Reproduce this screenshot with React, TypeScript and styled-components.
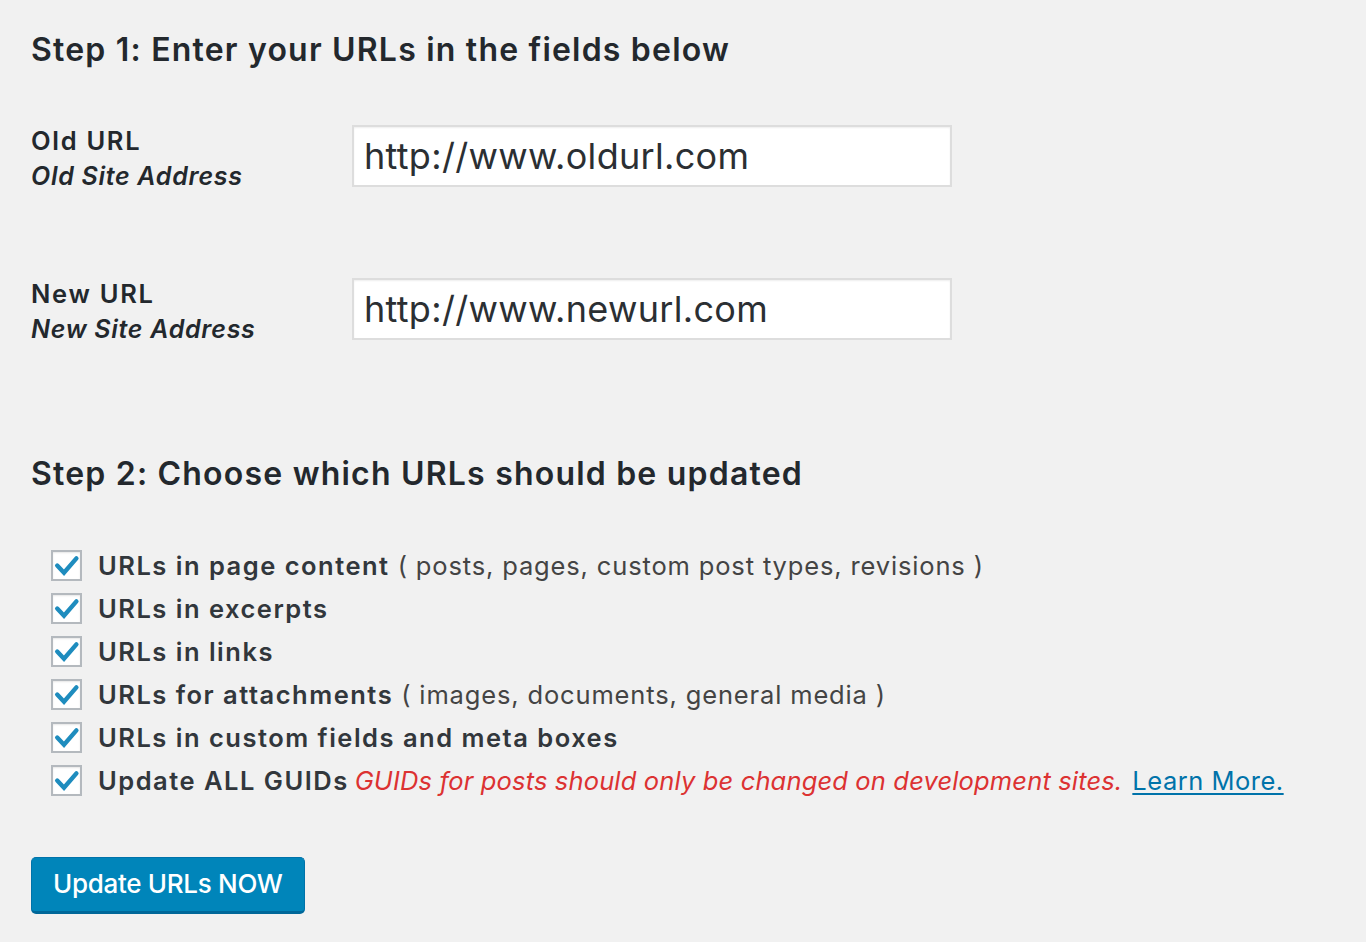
import React from "react";
import styled, { createGlobalStyle } from "styled-components";

const Global = createGlobalStyle`
  html, body {
    margin: 0;
    background: #f1f1f1;
  }
  body {
    font-family: Inter, "Noto Sans", "Liberation Sans", sans-serif;
    color: #23282d;
  }
`;

const Page = styled.div`
  padding: 28px 31px 30px;
  min-height: 884px;
`;

const Heading = styled.h2<{ $top?: number }>`
  margin: ${(p) => p.$top ?? 0}px 0 0;
  font-size: 32px;
  font-weight: 600;
  line-height: 44px;
  letter-spacing: 1.2px;
`;

const FieldRow = styled.div<{ $top: number }>`
  display: flex;
  align-items: flex-start;
  margin-top: ${(p) => p.$top}px;
`;

const LabelCol = styled.div`
  width: 321px;
  height: 70px;
`;

const LabelTitle = styled.div`
  font-size: 25.5px;
  font-weight: 600;
  line-height: 32px;
  letter-spacing: 1.7px;
`;

const LabelSub = styled.div`
  font-size: 25px;
  font-weight: 600;
  font-style: italic;
  line-height: 38px;
  letter-spacing: 0.7px;
`;

const UrlInput = styled.input`
  box-sizing: border-box;
  width: 600px;
  height: 62px;
  border: 2px solid #dddddd;
  background: #fff;
  box-shadow: inset 0 1px 2px rgba(0, 0, 0, 0.07);
  padding: 0 10px;
  font-family: inherit;
  font-size: 36px;
  letter-spacing: 0.3px;
  color: #2b2f33;
  outline: none;
`;

const Options = styled.div`
  margin-top: 48px;
  padding-left: 20px;
  display: flex;
  flex-direction: column;
`;

const Option = styled.label`
  display: flex;
  align-items: center;
  gap: 16px;
  height: 43px;
  font-size: 25.5px;
  line-height: 1;
`;

const Box = styled.span`
  box-sizing: border-box;
  width: 31px;
  height: 31px;
  flex: none;
  border: 2px solid #b4b9be;
  background: #fff;
  box-shadow: inset 0 1px 2px rgba(0, 0, 0, 0.1);
  display: flex;
  align-items: center;
  justify-content: center;
`;

const Strong = styled.span`
  font-weight: 600;
  color: #32373c;
  letter-spacing: 1.5px;
`;

const Note = styled.span`
  color: #444;
  white-space: pre;
  letter-spacing: 0.85px;
`;

const Warn = styled.span`
  color: #dc3232;
  font-style: italic;
  margin-left: 6px;
  letter-spacing: 0.15px;
`;

const More = styled.a`
  color: #0073aa;
  text-decoration: underline;
  text-underline-offset: 3px;
  margin-left: 10px;
  letter-spacing: 0.5px;
`;

const Button = styled.button`
  margin-top: 55px;
  box-sizing: border-box;
  height: 57px;
  padding: 0 21px 3px;
  background: #0085ba;
  border: 1px solid #0073aa;
  border-bottom: 3px solid #006799;
  border-radius: 5px;
  color: #fff;
  font-family: inherit;
  font-size: 26px;
  font-weight: 500;
  letter-spacing: -0.3px;
  cursor: pointer;
`;

const Check = () => (
  <Box>
    <svg width="27" height="27" viewBox="0 0 27 27">
      <path
        d="M4.2 13.6 L11 20.8 L23.4 6.4"
        fill="none"
        stroke="#1e8cbe"
        strokeWidth="4.4"
        strokeLinecap="round"
        strokeLinejoin="miter"
      />
    </svg>
  </Box>
);

const options = [
  { label: "URLs in page content", note: " ( posts, pages, custom post types, revisions )" },
  { label: "URLs in excerpts" },
  { label: "URLs in links" },
  { label: "URLs for attachments", note: " ( images, documents, general media )" },
  { label: "URLs in custom fields and meta boxes" },
];

export default function App() {
  return (
    <>
      <Global />
      <Page>
        <Heading>Step 1: Enter your URLs in the fields below</Heading>

        <FieldRow $top={53}>
          <LabelCol>
            <LabelTitle>Old URL</LabelTitle>
            <LabelSub>Old Site Address</LabelSub>
          </LabelCol>
          <UrlInput defaultValue="http://www.oldurl.com" />
        </FieldRow>

        <FieldRow $top={83}>
          <LabelCol>
            <LabelTitle>New URL</LabelTitle>
            <LabelSub>New Site Address</LabelSub>
          </LabelCol>
          <UrlInput defaultValue="http://www.newurl.com" />
        </FieldRow>

        <Heading $top={104}>Step 2: Choose which URLs should be updated</Heading>

        <Options>
          {options.map((o) => (
            <Option key={o.label}>
              <Check />
              <span>
                <Strong>{o.label}</Strong>
                {o.note && <Note>{o.note}</Note>}
              </span>
            </Option>
          ))}
          <Option>
            <Check />
            <span>
              <Strong>Update ALL GUIDs</Strong>
              <Warn>GUIDs for posts should only be changed on development sites.</Warn>
              <More href="#">Learn More.</More>
            </span>
          </Option>
        </Options>

        <Button>Update URLs NOW</Button>
      </Page>
    </>
  );
}
